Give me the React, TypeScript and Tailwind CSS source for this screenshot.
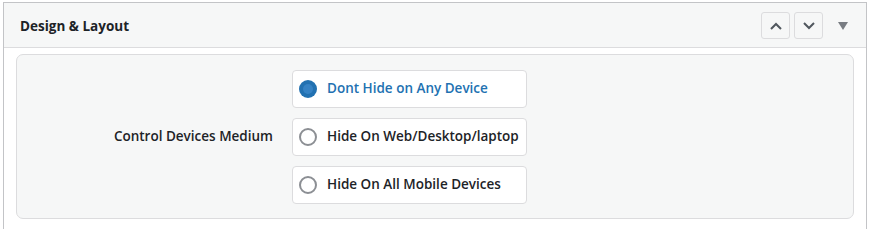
import { useState } from "react";

const OPTIONS = ["Dont Hide on Any Device", "Hide On Web/Desktop/laptop", "Hide On All Mobile Devices"];

export default function App() {
  const [selected, setSelected] = useState(0);

  return (
    <div className="h-[229px] w-[869px] overflow-hidden bg-white pl-[3px] pr-[2px] pt-[2px] font-['Open_Sans',sans-serif] text-[#1d2327]">
      <div className="h-[240px] border border-[#c3c4c7] bg-white">
        <div className="flex h-[45px] items-center border-b border-[#dcdcde] bg-[#f6f7f7] pl-4 pr-3">
          <h2 className="flex-1 pt-[2px] text-[13.5px] font-bold">Design &amp; Layout</h2>
          <div className="flex items-center gap-[4px] pt-[1px]">
            <button className="flex h-[27px] w-[29px] items-center justify-center rounded-[3px] border border-[#dcdcde]">
              <svg width="14" height="14" viewBox="0 0 14 14" fill="none" stroke="#50575e" strokeWidth="2">
                <path d="M2 10 L7 5 L12 10" />
              </svg>
            </button>
            <button className="flex h-[27px] w-[29px] items-center justify-center rounded-[3px] border border-[#dcdcde]">
              <svg width="14" height="14" viewBox="0 0 14 14" fill="none" stroke="#50575e" strokeWidth="2">
                <path d="M2 4 L7 9 L12 4" />
              </svg>
            </button>
            <span className="ml-[5px] flex w-[22px] justify-center">
              <svg width="10" height="8" viewBox="0 0 10 8">
                <path d="M0 0 H10 L5 8 Z" fill="#787c82" />
              </svg>
            </span>
          </div>
        </div>
        <div className="px-3 pt-[6px]">
          <div className="flex h-[165px] items-center rounded-[7px] border border-[#dcdcde] bg-[#f6f7f7]">
            <div className="w-[256px] text-right text-[13.5px] font-semibold">Control Devices Medium</div>
            <div className="flex flex-col gap-[10px] pl-[19px]">
              {OPTIONS.map((label, i) => {
                const active = selected === i;
                return (
                  <label
                    key={label}
                    onClick={() => setSelected(i)}
                    className="flex h-[38px] w-[235px] cursor-pointer items-center gap-[10px] rounded-[4px] border border-[#dcdcde] bg-white pl-[6px]"
                  >
                    {active ? (
                      <span className="flex h-[18px] w-[18px] items-center justify-center rounded-full bg-[#2271b1]">
                        <span className="h-[10px] w-[10px] rounded-full bg-[#3582c4]" />
                      </span>
                    ) : (
                      <span className="h-[18px] w-[18px] rounded-full border-2 border-[#8c8f94] bg-white" />
                    )}
                    <span className={`text-[13.5px] font-semibold ${active ? "text-[#2271b1]" : "text-[#1d2327]"}`}>{label}</span>
                  </label>
                );
              })}
            </div>
          </div>
        </div>
      </div>
    </div>
  );
}
